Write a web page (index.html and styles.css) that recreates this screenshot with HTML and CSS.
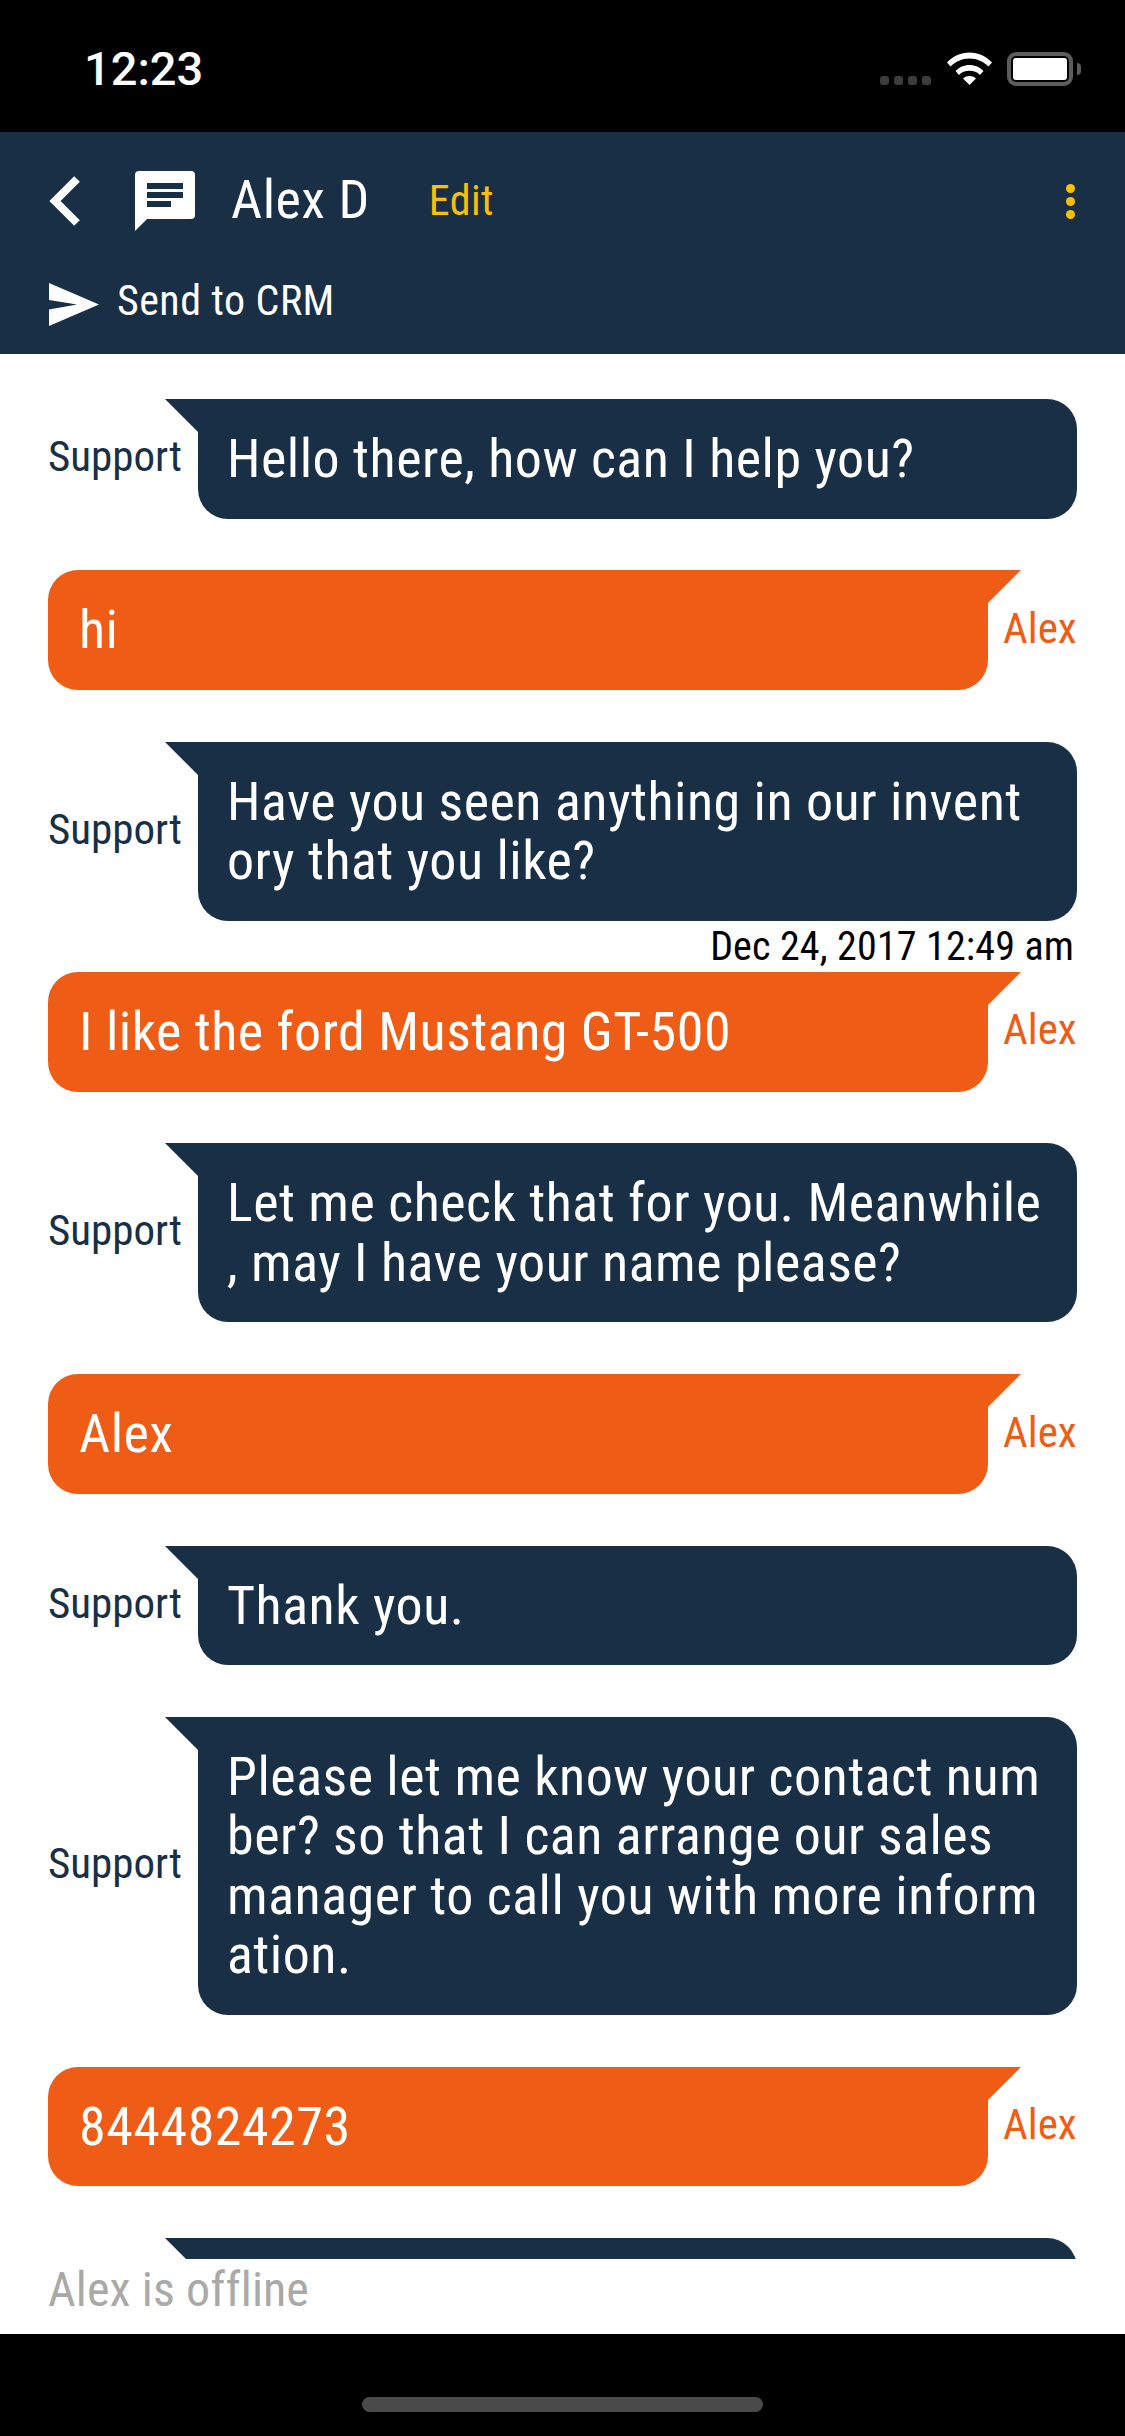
FILE: index.html
```html
<!DOCTYPE html>
<html lang="en">
<head>
    <meta charset="utf-8">
    <meta name="viewport" content="width=device-width, initial-scale=1.0">
    <title>Alex D</title>
    <link rel="stylesheet" href="styles.css">
</head>
<body>

<div class="phone">
    <div class="statusbar">
        <span class="time">12:23</span>
        <div class="status-icons">
            <div class="signal"><i></i><i></i><i></i><i></i></div>
            <svg class="wifi" viewBox="0 0 45 33" width="45" height="33">
                <path fill="#fff" d="M0 10.500C6 4 14 .5 22.500 .5S39 4 45 10.500L41.500 14.500C36.500 9.500 30 6.500 22.500 6.500S8.500 9.500 3.500 14.500Z"/>
                <path fill="#fff" d="M8.500 19C12 15.200 17 13 22.500 13S33 15.200 36.500 19L33 23C30.500 20.200 26.700 18.800 22.500 18.800S14.500 20.200 12 23Z"/>
                <path fill="#fff" d="M16 26.500C17.800 24.800 20 24 22.500 24S27.200 24.800 29 26.500L22.500 33Z"/>
            </svg>
            <div class="battery"><div class="battery-fill"></div></div>
        </div>
    </div>

    <div class="topbar">
        <div class="topbar-row">
            <svg class="back" viewBox="0 0 31 50" width="31" height="50">
                <path fill="none" stroke="#fff" stroke-width="8" d="M28 3 L6 25 L28 47"/>
            </svg>
            <svg class="chat-icon" viewBox="0 0 60 60" width="60" height="60">
                <path fill="#fff" d="M4 0H56A4 4 0 0 1 60 4V44A4 4 0 0 1 56 48H12L0 60V4A4 4 0 0 1 4 0Z"/>
                <path fill="#182f45" d="M12 12H48V18H12ZM12 21H48V27H12ZM12 30H36V36H12Z"/>
            </svg>
            <span class="name">Alex D</span>
            <span class="edit">Edit</span>
            <div class="more"><i></i><i></i><i></i></div>
        </div>
        <div class="crm-row">
            <svg class="send-icon" viewBox="0 0 50 43" width="50" height="43">
                <path fill="#fff" d="M0 0L50 21.500L0 43V26.500L28 21.500L0 17Z"/>
            </svg>
            <span class="crm">Send to CRM</span>
        </div>
    </div>

    <div class="messages">
        <div class="msg support">
            <span class="who">Support</span>
            <div class="bubble">Hello there, how can I help you?</div>
        </div>
        <div class="msg visitor">
            <div class="bubble">hi</div>
            <span class="who">Alex</span>
        </div>
        <div class="msg support">
            <span class="who">Support</span>
            <div class="bubble">Have you seen anything in our invent<br>ory that you like?</div>
        </div>
        <div class="stamp">Dec 24, 2017 12:49 am</div>
        <div class="msg visitor">
            <div class="bubble">I like the ford Mustang GT-500</div>
            <span class="who">Alex</span>
        </div>
        <div class="msg support">
            <span class="who">Support</span>
            <div class="bubble">Let me check that for you. Meanwhile<br>, may I have your name please?</div>
        </div>
        <div class="msg visitor">
            <div class="bubble">Alex</div>
            <span class="who">Alex</span>
        </div>
        <div class="msg support">
            <span class="who">Support</span>
            <div class="bubble">Thank you.</div>
        </div>
        <div class="msg support">
            <span class="who">Support</span>
            <div class="bubble">Please let me know your contact num<br>ber? so that I can arrange our sales<br>manager to call you with more inform<br>ation.</div>
        </div>
        <div class="msg visitor">
            <div class="bubble">8444824273</div>
            <span class="who">Alex</span>
        </div>
        <div class="msg last">
            <div class="bubble"></div>
        </div>
    </div>

    <div class="offline">Alex is offline</div>
    <div class="homebar"><div class="home-pill"></div></div>
</div>

</body>
</html>
```

FILE: styles.css
```css
* {
    box-sizing: border-box;
}
body {
    margin: 0;
    background-color: #fff;
    font-family: 'Roboto Condensed', 'Roboto', sans-serif;
    font-stretch: 75%;
}
.phone {
    width: 1125px;
    height: 2436px;
    display: flex;
    flex-direction: column;
    overflow: hidden;
}
.statusbar {
    height: 132px;
    flex: none;
    background-color: #000;
    color: #fff;
    display: flex;
    justify-content: space-between;
    padding: 46px 52px 0 84px;
}
.time {
    font-family: 'Roboto', sans-serif;
    font-stretch: 100%;
    font-size: 47px;
    font-weight: 500;
    line-height: 46px;
}
.status-icons {
    display: flex;
    align-items: flex-start;
    padding-top: 6px;
}
.signal {
    display: flex;
    gap: 5px;
    margin-top: 24px;
    margin-right: 16px;
}
.signal i {
    width: 9px;
    height: 9px;
    border-radius: 3px;
    background-color: #3c3c3c;
}
.wifi {
    margin-right: 15px;
}
.battery {
    position: relative;
    width: 66px;
    height: 34px;
    border: 4px solid #5c5c5c;
    border-radius: 9px;
    padding: 2px;
}
.battery::after {
    content: "";
    position: absolute;
    right: -12px;
    top: 7px;
    width: 4px;
    height: 12px;
    border-radius: 0 4px 4px 0;
    background-color: #5c5c5c;
}
.battery-fill {
    height: 100%;
    background-color: #fff;
    border-radius: 3px;
}
.topbar {
    height: 222px;
    flex: none;
    background-color: #182f45;
    color: #fff;
    padding: 39px 50px 0 49px;
}
.topbar-row {
    display: flex;
    align-items: center;
    height: 60px;
}
.back {
    margin-right: 55px;
}
.chat-icon {
    margin-right: 36px;
}
.name {
    font-size: 54px;
    letter-spacing: .5px;
    margin-right: 59px;
    margin-bottom: 3px;
}
.edit {
    font-size: 42px;
    letter-spacing: .4px;
    margin-bottom: 2px;
    color: #fbbf04;
}
.more {
    margin-left: auto;
    display: flex;
    flex-direction: column;
    gap: 4px;
}
.more i {
    width: 9px;
    height: 9px;
    border-radius: 50%;
    background-color: #fbbf04;
}
.crm-row {
    display: flex;
    align-items: flex-start;
    margin-top: 52px;
}
.send-icon {
    margin-right: 18px;
}
.crm {
    font-size: 42px;
    line-height: 42px;
    letter-spacing: .45px;
    margin-top: -3px;
}
.messages {
    height: 1905px;
    flex: none;
    overflow: hidden;
    padding: 45px 48px 0;
    display: flex;
    flex-direction: column;
    gap: 51.800px;
    background-color: #fff;
}
.msg {
    display: flex;
    align-items: center;
    flex: none;
}
.who {
    font-size: 43px;
    margin-bottom: 5px;
}
.bubble {
    position: relative;
    flex: 1;
    padding: 30px 30px 30px 29px;
    font-size: 54px;
    line-height: 59.500px;
    letter-spacing: .5px;
    color: #fff;
    border-radius: 0 30px 30px 30px;
}
.support .who {
    width: 150px;
    color: #182f45;
}
.support .bubble, .last .bubble {
    background-color: #182f45;
}
.last {
    padding-left: 150px;
}
.last .bubble {
    min-height: 119px;
}
.support .bubble::before, .last .bubble::before {
    content: "";
    position: absolute;
    left: -33px;
    top: 0;
    border-top: 33px solid #182f45;
    border-left: 33px solid transparent;
}
.visitor .bubble {
    background-color: #ef5c15;
    padding-left: 31px;
    border-radius: 30px 0 30px 30px;
    margin-right: 15px;
}
.visitor .bubble::after {
    content: "";
    position: absolute;
    right: -33px;
    top: 0;
    border-top: 33px solid #ef5c15;
    border-right: 33px solid transparent;
}
.visitor .who {
    width: 74px;
    color: #ef5c15;
}
.stamp {
    height: 52px;
    margin: -51px 3px -53px 0;
    flex: none;
    text-align: right;
    font-size: 40px;
    letter-spacing: .15px;
    line-height: 52px;
    color: #000;
}
.offline {
    height: 75px;
    flex: none;
    padding-left: 48px;
    font-size: 48px;
    letter-spacing: .1px;
    line-height: 62px;
    color: #a9a9a9;
    background-color: #fff;
}
.homebar {
    flex: 1;
    background-color: #000;
    padding-top: 63px;
}
.home-pill {
    width: 401px;
    height: 15px;
    margin-left: 362px;
    border-radius: 8px;
    background-color: #4a4a4a;
}
```
